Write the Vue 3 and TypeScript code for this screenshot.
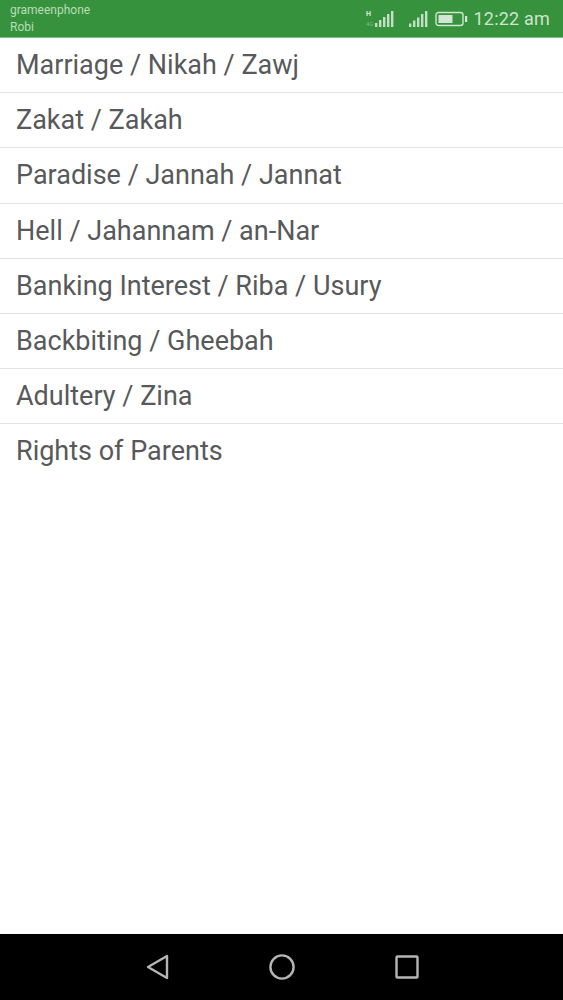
<script setup lang="ts">
const topics: string[] = [
  'Marriage / Nikah / Zawj',
  'Zakat / Zakah',
  'Paradise / Jannah / Jannat',
  'Hell / Jahannam / an-Nar',
  'Banking Interest / Riba / Usury',
  'Backbiting / Gheebah',
  'Adultery / Zina',
  'Rights of Parents',
]
</script>

<template>
  <div class="screen">
    <header class="status">
      <div class="carriers">
        <span>grameenphone</span>
        <span>Robi</span>
      </div>
      <div class="indicators">
        <svg class="sig1" width="28" height="20" viewBox="0 0 28 20">
          <text x="0" y="7" class="h">H</text>
          <text x="0" y="17" class="g">4G</text>
          <rect x="9" y="14" width="2.4" height="4" />
          <rect x="13" y="11" width="2.4" height="7" />
          <rect x="17" y="8" width="2.4" height="10" />
          <rect x="21" y="5" width="2.4" height="13" />
          <rect x="25" y="2" width="2.4" height="16" />
        </svg>
        <svg class="sig2" width="19" height="18" viewBox="0 0 19 18">
          <rect x="0" y="13.5" width="2.4" height="3.5" />
          <rect x="4" y="10.5" width="2.4" height="6.5" />
          <rect x="8" y="7.5" width="2.4" height="9.5" />
          <rect x="12" y="4" width="2.4" height="13" />
          <rect x="16" y="1" width="2.4" height="16" />
        </svg>
        <svg class="battery" width="33" height="16" viewBox="0 0 33 16">
          <rect x="1" y="1.5" width="27" height="13" rx="2.5" class="shell" />
          <rect x="3.5" y="4" width="14" height="8" class="level" />
          <rect x="30" y="5" width="2.2" height="6" class="level" />
        </svg>
        <span class="clock">12:22 am</span>
      </div>
    </header>

    <ul class="list">
      <li v-for="topic in topics" :key="topic" class="row">{{ topic }}</li>
    </ul>

    <nav class="navbar">
      <svg width="24" height="26" viewBox="0 0 24 26">
        <path d="M22 2 L3 13 L22 24 Z" class="nav-stroke" />
      </svg>
      <svg width="26" height="26" viewBox="0 0 26 26">
        <circle cx="13" cy="13" r="11.6" class="nav-stroke" />
      </svg>
      <svg width="24" height="24" viewBox="0 0 24 24">
        <rect x="1.5" y="1.5" width="21" height="21" rx="1" class="nav-stroke" />
      </svg>
    </nav>
  </div>
</template>

<style>
html, body { margin: 0; background: #fff; }
</style>

<style scoped>
.screen {
  width: 563px;
  height: 1000px;
  display: flex;
  flex-direction: column;
  background: #fdfffe;
  font-family: Roboto, "Liberation Sans", sans-serif;
  overflow: hidden;
}
.status {
  height: 37px;
  flex: none;
  box-sizing: border-box;
  background: #37923d;
  border-bottom: 1px solid #7fbb84;
  height: 38px;
  display: flex;
  justify-content: space-between;
  padding: 2px 13px 0 10px;
  color: #b9dcb9;
}
.carriers {
  display: flex;
  flex-direction: column;
  font-size: 12px;
  line-height: 17px;
}
.indicators {
  display: flex;
  align-items: center;
  height: 33px;
}
.sig1 { fill: #c4e0c4; margin-left: 0; }
.h { font-size: 7px; font-weight: 700; fill: #d6ead6; }
.g { font-size: 6px; fill: #7fb884; }
.sig2 { fill: #c4e0c4; margin-left: 15px; }
.battery { margin-left: 7px; }
.shell { fill: none; stroke: #cfe5cf; stroke-width: 1.4; }
.level { fill: #d3e6d3; }
.clock {
  margin-left: 6px;
  font-size: 18px;
  color: #cde4cd;
  letter-spacing: 0.2px;
}
.list {
  list-style: none;
  margin: 0;
  padding: 0;
  flex: 1;
  background: #fff;
}
.row {
  box-sizing: border-box;
  height: 55.2px;
  line-height: 54px;
  padding-left: 16px;
  font-size: 27px;
  color: #58595b;
  border-bottom: 1px solid #dfe3e6;
}
.row:last-child { border-bottom: none; }
.navbar {
  flex: none;
  height: 66px;
  background: #000;
  display: flex;
  align-items: center;
  justify-content: center;
  gap: 100px;
}
.nav-stroke {
  fill: none;
  stroke: #b5b5b5;
  stroke-width: 2.4;
  stroke-linejoin: round;
}
</style>
